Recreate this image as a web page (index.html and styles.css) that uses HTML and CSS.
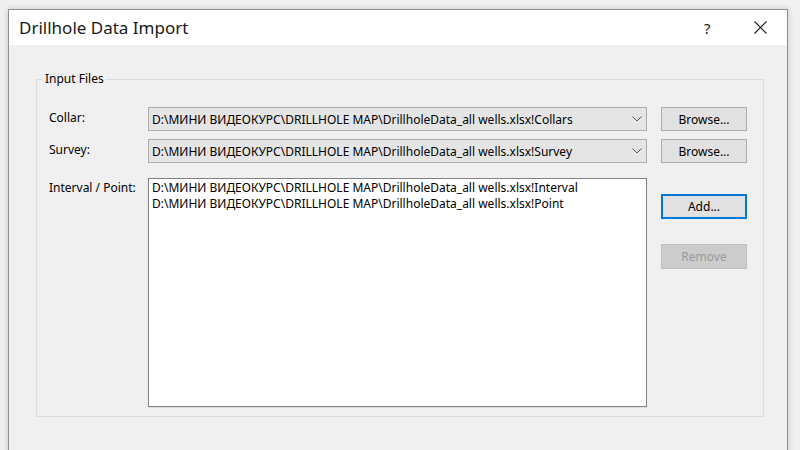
FILE: index.html
```html
<!DOCTYPE html>
<html lang="en">
<head>
  <meta charset="UTF-8">
  <title>Drillhole Data Import</title>
  <link rel="stylesheet" href="styles.css">
</head>
<body>
  <div class="window">
    <div class="titlebar">
      <span class="title">Drillhole Data Import</span>
      <span class="help">?</span>
      <span class="close">
        <svg width="13" height="13" viewBox="0 0 13 13">
          <path d="M0.5 0.5 L12.5 12.5 M12.5 0.5 L0.5 12.5" stroke="#1a1a1a" stroke-width="1.1" fill="none"/>
        </svg>
      </span>
    </div>

    <fieldset class="group">
      <legend>Input Files</legend>
      <div class="form-grid">
        <label class="field-label">Collar:</label>
        <div class="combo">
          <span class="combo-text">D:\МИНИ ВИДЕОКУРС\DRILLHOLE MAP\DrillholeData_all wells.xlsx!Collars</span>
          <svg class="chevron" width="10" height="6" viewBox="0 0 10 6"><path d="M0.5 0.5 L5 5 L9.5 0.5" stroke="#5a5a5a" stroke-width="1" fill="none"/></svg>
        </div>
        <button class="btn">Browse...</button>

        <label class="field-label">Survey:</label>
        <div class="combo">
          <span class="combo-text">D:\МИНИ ВИДЕОКУРС\DRILLHOLE MAP\DrillholeData_all wells.xlsx!Survey</span>
          <svg class="chevron" width="10" height="6" viewBox="0 0 10 6"><path d="M0.5 0.5 L5 5 L9.5 0.5" stroke="#5a5a5a" stroke-width="1" fill="none"/></svg>
        </div>
        <button class="btn">Browse...</button>

        <label class="field-label list-label">Interval / Point:</label>
        <div class="listbox">
          <div class="list-item">D:\МИНИ ВИДЕОКУРС\DRILLHOLE MAP\DrillholeData_all wells.xlsx!Interval</div>
          <div class="list-item">D:\МИНИ ВИДЕОКУРС\DRILLHOLE MAP\DrillholeData_all wells.xlsx!Point</div>
        </div>
        <div class="list-buttons">
          <button class="btn btn-default">Add...</button>
          <button class="btn" disabled>Remove</button>
        </div>
      </div>
    </fieldset>
  </div>
</body>
</html>
```

FILE: styles.css
```css
body {
  margin: 0;
  background-color: #f0f0f0;
  font-family: "Noto Sans", "Open Sans", sans-serif;
  font-size: 12px;
  color: #000;
  overflow: hidden;
  height: 450px;
}
.window {
  margin: 9px 0 0 8px;
  width: 778px;
  height: 460px;
  border: 1px solid #8f8f8f;
  background-color: #f0f0f0;
  box-shadow: 0 0 6px rgba(0, 0, 0, 0.18);
}
.titlebar {
  height: 35px;
  background-color: #fff;
  display: flex;
  align-items: center;
}
.title {
  flex: 1;
  padding-left: 10px;
  font-size: 17px;
  color: #1a1a1a;
}
.help {
  width: 12px;
  font-size: 15px;
  color: #1a1a1a;
  margin-right: 38px;
}
.close {
  display: flex;
  margin-right: 20px;
}
.group {
  margin: 26px 23px 0 27px;
  padding: 20px 15px 9px 12px;
  border: 1px solid #dcdcdc;
}
.group legend {
  margin-left: -6px;
  padding: 0 2px;
  line-height: 16px;
}
.form-grid {
  display: grid;
  grid-template-columns: 85px 499px 86px;
  grid-template-rows: 24px 24px auto;
  column-gap: 14px;
  row-gap: 8px;
}
.field-label {
  align-self: center;
  padding-bottom: 4px;
  white-space: nowrap;
}
.list-label {
  align-self: start;
  margin-top: 7px;
  padding-top: 1px;
}
.combo {
  display: flex;
  align-items: center;
  background-color: #e5e5e5;
  border: 1px solid #adadad;
  padding: 0 4px 0 3px;
}
.combo-text {
  flex: 1;
  white-space: nowrap;
  overflow: hidden;
}
.listbox {
  margin-top: 7px;
  height: 225px;
  background-color: #fff;
  border: 1px solid #828282;
  box-shadow: 0 1px 1px rgba(0, 0, 0, 0.08);
  padding: 1px 3px;
}
.list-item {
  line-height: 16px;
  white-space: nowrap;
}
.btn {
  font-family: inherit;
  font-size: 12px;
  background-color: #e1e1e1;
  border: 1px solid #adadad;
  color: #000;
  padding: 0;
  height: 24px;
}
.btn-default {
  border: 2px solid #0078d7;
}
.btn:disabled {
  background-color: #cccccc;
  border-color: #bfbfbf;
  color: #9a9a9a;
}
.list-buttons {
  margin-top: 23px;
  display: flex;
  flex-direction: column;
  gap: 25px;
}
.list-buttons .btn {
  height: 25px;
}
```
